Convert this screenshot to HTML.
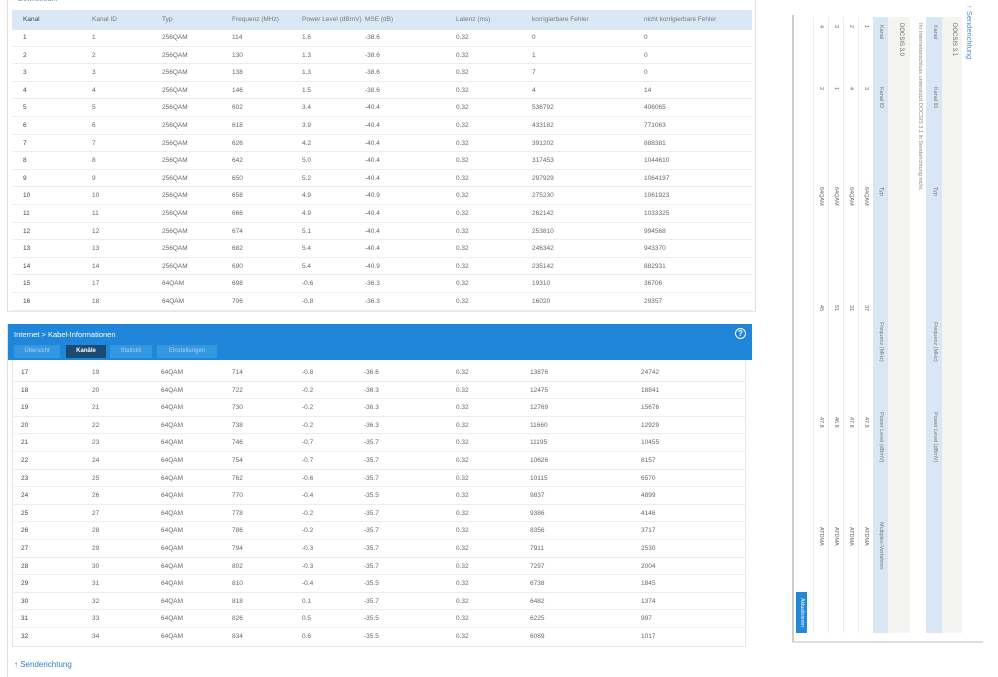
<!DOCTYPE html>
<html><head><meta charset="utf-8"><style>
*{margin:0;padding:0;box-sizing:border-box}
body{width:998px;height:677px;background:#fff;position:relative;overflow:hidden;font-family:"Liberation Sans",sans-serif;color:#666;font-size:6.5px}
.abs{position:absolute}
.row{position:absolute;height:17.6px;border-bottom:1px solid #ececec}
.row span{position:absolute;top:5px;white-space:nowrap}
.t span:nth-child(1){left:11px;color:#444}.t span:nth-child(2){left:80px}.t span:nth-child(3){left:150px}.t span:nth-child(4){left:220px}.t span:nth-child(5){left:290px}.t span:nth-child(6){left:353px}.t span:nth-child(7){left:444px}.t span:nth-child(8){left:520px}.t span:nth-child(9){left:632px}
.b span:nth-child(1){left:9px;color:#444}.b span:nth-child(2){left:80px}.b span:nth-child(3){left:149px}.b span:nth-child(4){left:220px}.b span:nth-child(5){left:290px}.b span:nth-child(6){left:352px}.b span:nth-child(7){left:444px}.b span:nth-child(8){left:518px}.b span:nth-child(9){left:629px}
.rot{position:absolute;left:975px;top:17px;width:616px;height:190px;transform:rotate(90deg);transform-origin:0 0}
.rot div{position:absolute}
.rot .h span,.rot .r span{position:absolute;top:4px;white-space:nowrap}
</style></head><body>

<!-- top panel -->
<div class="abs" style="left:7px;top:0;width:1px;height:312px;background:#ddd"></div>
<div class="abs" style="left:755px;top:0;width:1px;height:312px;background:#ddd"></div>
<div class="abs" style="left:7px;top:311px;width:749px;height:1px;background:#e6e6e6"></div>
<div class="abs" style="left:18px;top:-4px;font-size:7px;color:#888">Downstream</div>
<div class="abs" style="left:12px;top:10px;width:740px;height:20px;background:#dae8f5"></div>
<div class="row t" style="left:12px;top:11px;width:740px;border:none;color:#777"><span>Kanal</span><span>Kanal ID</span><span>Typ</span><span>Frequenz (MHz)</span><span>Power Level (dBmV)</span><span>MSE (dB)</span><span>Latenz (ms)</span><span>korrigierbare Fehler</span><span>nicht korrigierbare Fehler</span></div>
<div style="position:absolute;left:12px;top:29px;width:740px">
<div class="row t" style="top:0;width:740px"><span>1</span><span>1</span><span>256QAM</span><span>114</span><span>1.6</span><span>-38.6</span><span>0.32</span><span>0</span><span>0</span></div>
<div class="row t" style="top:17.6px;width:740px"><span>2</span><span>2</span><span>256QAM</span><span>130</span><span>1.3</span><span>-38.6</span><span>0.32</span><span>1</span><span>0</span></div>
<div class="row t" style="top:35.2px;width:740px"><span>3</span><span>3</span><span>256QAM</span><span>138</span><span>1.3</span><span>-38.6</span><span>0.32</span><span>7</span><span>0</span></div>
<div class="row t" style="top:52.8px;width:740px"><span>4</span><span>4</span><span>256QAM</span><span>146</span><span>1.5</span><span>-38.6</span><span>0.32</span><span>4</span><span>14</span></div>
<div class="row t" style="top:70.4px;width:740px"><span>5</span><span>5</span><span>256QAM</span><span>602</span><span>3.4</span><span>-40.4</span><span>0.32</span><span>536792</span><span>406065</span></div>
<div class="row t" style="top:88px;width:740px"><span>6</span><span>6</span><span>256QAM</span><span>618</span><span>3.9</span><span>-40.4</span><span>0.32</span><span>433182</span><span>771063</span></div>
<div class="row t" style="top:105.6px;width:740px"><span>7</span><span>7</span><span>256QAM</span><span>626</span><span>4.2</span><span>-40.4</span><span>0.32</span><span>391202</span><span>888381</span></div>
<div class="row t" style="top:123.2px;width:740px"><span>8</span><span>8</span><span>256QAM</span><span>642</span><span>5.0</span><span>-40.4</span><span>0.32</span><span>317453</span><span>1044610</span></div>
<div class="row t" style="top:140.8px;width:740px"><span>9</span><span>9</span><span>256QAM</span><span>650</span><span>5.2</span><span>-40.4</span><span>0.32</span><span>297929</span><span>1064197</span></div>
<div class="row t" style="top:158.4px;width:740px"><span>10</span><span>10</span><span>256QAM</span><span>658</span><span>4.9</span><span>-40.9</span><span>0.32</span><span>275230</span><span>1061923</span></div>
<div class="row t" style="top:176px;width:740px"><span>11</span><span>11</span><span>256QAM</span><span>666</span><span>4.9</span><span>-40.4</span><span>0.32</span><span>262142</span><span>1033325</span></div>
<div class="row t" style="top:193.6px;width:740px"><span>12</span><span>12</span><span>256QAM</span><span>674</span><span>5.1</span><span>-40.4</span><span>0.32</span><span>253810</span><span>994568</span></div>
<div class="row t" style="top:211.2px;width:740px"><span>13</span><span>13</span><span>256QAM</span><span>682</span><span>5.4</span><span>-40.4</span><span>0.32</span><span>246342</span><span>943370</span></div>
<div class="row t" style="top:228.8px;width:740px"><span>14</span><span>14</span><span>256QAM</span><span>690</span><span>5.4</span><span>-40.9</span><span>0.32</span><span>235142</span><span>882931</span></div>
<div class="row t" style="top:246.4px;width:740px"><span>15</span><span>17</span><span>64QAM</span><span>698</span><span>-0.6</span><span>-36.3</span><span>0.32</span><span>19310</span><span>36706</span></div>
<div class="row t" style="top:264px;width:740px"><span>16</span><span>18</span><span>64QAM</span><span>706</span><span>-0.8</span><span>-36.3</span><span>0.32</span><span>16020</span><span>29357</span></div>
</div>

<!-- bottom panel -->
<div class="abs" style="left:7px;top:324px;width:1px;height:353px;background:#ddd"></div>
<div class="abs" style="left:8px;top:324px;width:744px;height:36px;background:#1f86d9"></div>
<div class="abs" style="left:14px;top:330px;font-size:7.5px;color:#fff">Internet &gt; Kabel-Informationen</div>
<div class="abs" style="left:735px;top:328px;width:11px;height:11px;border:1.2px solid #fff;border-radius:50%;color:#fff;font-size:8px;line-height:9px;text-align:center;font-weight:bold">?</div>
<div class="abs" style="left:14px;top:345px;width:46px;height:13px;background:#3498e0;color:#a8d0f0;font-size:6px;text-align:center;line-height:13px">Übersicht</div>
<div class="abs" style="left:66px;top:345px;width:40px;height:13px;background:#1b4a73;color:#fff;font-size:6px;text-align:center;line-height:13px;font-weight:bold">Kanäle</div>
<div class="abs" style="left:110px;top:345px;width:42px;height:13px;background:#3498e0;color:#a8d0f0;font-size:6px;text-align:center;line-height:13px">Statistik</div>
<div class="abs" style="left:157px;top:345px;width:60px;height:13px;background:#3498e0;color:#a8d0f0;font-size:6px;text-align:center;line-height:13px">Einstellungen</div>
<div class="abs" style="left:12px;top:360px;width:1px;height:286px;background:#e6e6e6"></div>
<div class="abs" style="left:745px;top:360px;width:1px;height:286px;background:#e6e6e6"></div>
<div class="abs" style="left:12px;top:646px;width:734px;height:1px;background:#e6e6e6"></div>
<div style="position:absolute;left:12px;top:364px;width:733px">
<div class="row b" style="top:0;width:733px"><span>17</span><span>19</span><span>64QAM</span><span>714</span><span>-0.8</span><span>-36.6</span><span>0.32</span><span>13876</span><span>24742</span></div>
<div class="row b" style="top:17.6px;width:733px"><span>18</span><span>20</span><span>64QAM</span><span>722</span><span>-0.2</span><span>-36.3</span><span>0.32</span><span>12475</span><span>18841</span></div>
<div class="row b" style="top:35.2px;width:733px"><span>19</span><span>21</span><span>64QAM</span><span>730</span><span>-0.2</span><span>-36.3</span><span>0.32</span><span>12769</span><span>15676</span></div>
<div class="row b" style="top:52.8px;width:733px"><span>20</span><span>22</span><span>64QAM</span><span>738</span><span>-0.2</span><span>-36.3</span><span>0.32</span><span>11660</span><span>12929</span></div>
<div class="row b" style="top:70.4px;width:733px"><span>21</span><span>23</span><span>64QAM</span><span>746</span><span>-0.7</span><span>-35.7</span><span>0.32</span><span>11195</span><span>10455</span></div>
<div class="row b" style="top:88px;width:733px"><span>22</span><span>24</span><span>64QAM</span><span>754</span><span>-0.7</span><span>-35.7</span><span>0.32</span><span>10626</span><span>8157</span></div>
<div class="row b" style="top:105.6px;width:733px"><span>23</span><span>25</span><span>64QAM</span><span>762</span><span>-0.6</span><span>-35.7</span><span>0.32</span><span>10115</span><span>6570</span></div>
<div class="row b" style="top:123.2px;width:733px"><span>24</span><span>26</span><span>64QAM</span><span>770</span><span>-0.4</span><span>-35.5</span><span>0.32</span><span>9837</span><span>4899</span></div>
<div class="row b" style="top:140.8px;width:733px"><span>25</span><span>27</span><span>64QAM</span><span>778</span><span>-0.2</span><span>-35.7</span><span>0.32</span><span>9386</span><span>4146</span></div>
<div class="row b" style="top:158.4px;width:733px"><span>26</span><span>28</span><span>64QAM</span><span>786</span><span>-0.2</span><span>-35.7</span><span>0.32</span><span>8356</span><span>3717</span></div>
<div class="row b" style="top:176px;width:733px"><span>27</span><span>29</span><span>64QAM</span><span>794</span><span>-0.3</span><span>-35.7</span><span>0.32</span><span>7911</span><span>2530</span></div>
<div class="row b" style="top:193.6px;width:733px"><span>28</span><span>30</span><span>64QAM</span><span>802</span><span>-0.3</span><span>-35.7</span><span>0.32</span><span>7297</span><span>2004</span></div>
<div class="row b" style="top:211.2px;width:733px"><span>29</span><span>31</span><span>64QAM</span><span>810</span><span>-0.4</span><span>-35.5</span><span>0.32</span><span>6738</span><span>1845</span></div>
<div class="row b" style="top:228.8px;width:733px"><span>30</span><span>32</span><span>64QAM</span><span>818</span><span>0.1</span><span>-35.7</span><span>0.32</span><span>6482</span><span>1374</span></div>
<div class="row b" style="top:246.4px;width:733px"><span>31</span><span>33</span><span>64QAM</span><span>826</span><span>0.5</span><span>-35.5</span><span>0.32</span><span>6225</span><span>997</span></div>
<div class="row b" style="top:264px;width:733px;border:none"><span>32</span><span>34</span><span>64QAM</span><span>834</span><span>0.6</span><span>-35.5</span><span>0.32</span><span>6089</span><span>1017</span></div>
</div>
<div class="abs" style="left:14px;top:660px;font-size:8px;color:#2a7fc4">↑ Senderichtung</div>

<!-- right rotated panel -->
<div class="abs" style="left:792px;top:15px;width:2px;height:628px;background:#ccc"></div>
<div class="abs" style="left:792px;top:641px;width:191px;height:2px;background:#ddd"></div>
<div class="rot">
  <div style="left:-12px;top:1px;font-size:7.5px;color:#4a8ac8;white-space:nowrap">↑ Senderichtung</div>
  <div style="left:0;top:13px;width:616px;height:20px;background:#f4f4f2"></div>
  <div style="left:6px;top:18px;font-size:6px;color:#666">DOCSIS 3.1</div>
  <div class="h" style="left:0;top:33px;width:616px;height:16px;background:#d9e7f5;color:#777;font-size:5.5px"><span style="left:8px">Kanal</span><span style="left:70px">Kanal ID</span><span style="left:170px">Typ</span><span style="left:305px">Frequenz (MHz)</span><span style="left:395px">Power Level (dBmV)</span></div>
  <div style="left:6px;top:52px;font-size:5.5px;color:#888;white-space:nowrap">Ihr Internetanschluss unterstützt DOCSIS 3.1 in Senderichtung nicht.</div>
  <div style="left:0;top:65px;width:616px;height:22px;background:#f4f4f2"></div>
  <div style="left:6px;top:71px;font-size:6px;color:#666">DOCSIS 3.0</div>
  <div class="h" style="left:0;top:87px;width:616px;height:15px;background:#d9e7f5;color:#777;font-size:5.5px"><span style="left:8px">Kanal</span><span style="left:70px">Kanal ID</span><span style="left:170px">Typ</span><span style="left:305px">Frequenz (MHz)</span><span style="left:395px">Power Level (dBmV)</span><span style="left:505px">Multiplex-Verfahren</span></div>
  <div class="r" style="left:0;top:102px;width:616px;height:15px;border-bottom:1px solid #eee;font-size:5.5px"><span style="left:8px">1</span><span style="left:70px">3</span><span style="left:170px">64QAM</span><span style="left:288px">37</span><span style="left:400px">47.8</span><span style="left:510px">ATDMA</span></div>
  <div class="r" style="left:0;top:117px;width:616px;height:15px;border-bottom:1px solid #eee;font-size:5.5px"><span style="left:8px">2</span><span style="left:70px">4</span><span style="left:170px">64QAM</span><span style="left:288px">31</span><span style="left:400px">47.8</span><span style="left:510px">ATDMA</span></div>
  <div class="r" style="left:0;top:132px;width:616px;height:15px;border-bottom:1px solid #eee;font-size:5.5px"><span style="left:8px">3</span><span style="left:70px">1</span><span style="left:170px">64QAM</span><span style="left:288px">51</span><span style="left:400px">46.8</span><span style="left:510px">ATDMA</span></div>
  <div class="r" style="left:0;top:147px;width:616px;height:15px;border-bottom:1px solid #eee;font-size:5.5px"><span style="left:8px">4</span><span style="left:70px">2</span><span style="left:170px">64QAM</span><span style="left:288px">45</span><span style="left:400px">47.8</span><span style="left:510px">ATDMA</span></div>
  <div style="left:575px;top:168px;width:41px;height:11px;background:#2288d8;color:#fff;font-size:5px;text-align:center;line-height:11px">Aktualisieren</div>
</div>
</body></html>
